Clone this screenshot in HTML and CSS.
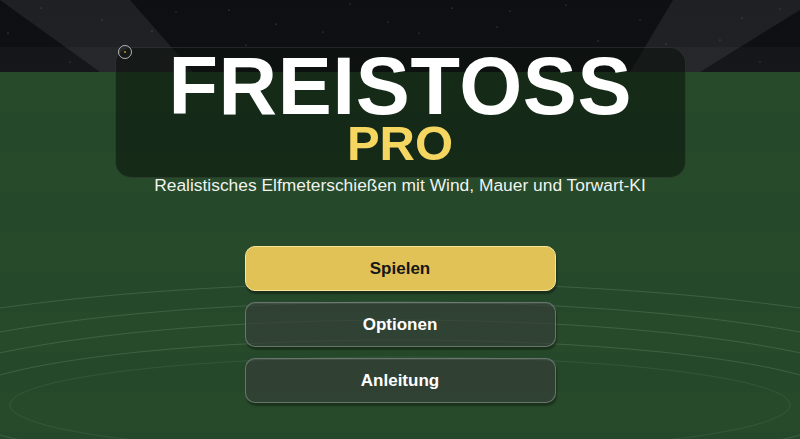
FILE: index.html
```html
<!DOCTYPE html>
<html lang="de">
<head>
<meta charset="utf-8">
<title>Freistoss Pro</title>
<link rel="stylesheet" href="styles.css">
</head>
<body>
<div class="scene">
  <svg class="backdrop" viewBox="0 0 800 439" width="800" height="439" aria-hidden="true">
    <polygon class="beam" points="0,0 130,0 193,72 100,72"/>
    <polygon class="beam" points="673,0 800,0 800,10 700,72 630,72"/>
    <g class="stars">
      <circle cx="152" cy="31" r="0.6"/><circle cx="176" cy="12" r="0.5"/><circle cx="229" cy="10" r="0.6"/>
      <circle cx="276" cy="24" r="0.6"/><circle cx="323" cy="32" r="0.5"/><circle cx="41" cy="8" r="0.5"/>
      <circle cx="8" cy="33" r="0.6"/><circle cx="70" cy="62" r="0.5"/><circle cx="419" cy="33" r="0.5"/>
      <circle cx="452" cy="8" r="0.6"/><circle cx="497" cy="27" r="0.5"/><circle cx="510" cy="11" r="0.5"/>
      <circle cx="598" cy="41" r="0.6"/><circle cx="566" cy="5" r="0.5"/><circle cx="742" cy="18" r="0.6"/>
      <circle cx="780" cy="9" r="0.5"/><circle cx="760" cy="62" r="0.5"/><circle cx="666" cy="44" r="0.5"/>
      <circle cx="350" cy="4" r="0.5"/><circle cx="388" cy="22" r="0.5"/><circle cx="246" cy="45" r="0.5"/>
      <circle cx="102" cy="20" r="0.5"/><circle cx="640" cy="20" r="0.5"/><circle cx="720" cy="40" r="0.5"/>
    </g>
    <g class="pitch">
      <ellipse cx="400" cy="405" rx="659" ry="122"/>
      <ellipse cx="400" cy="405" rx="567" ry="103"/>
      <ellipse cx="400" cy="405" rx="506" ry="85"/>
      <ellipse cx="400" cy="405" rx="451" ry="65"/>
      <ellipse class="inner" cx="400" cy="405" rx="390" ry="48"/>
    </g>
  </svg>

  <main class="menu">
    <header class="logo-card">
      <h1 class="title">FREISTOSS</h1>
      <div class="title-pro">PRO</div>
    </header>
    <p class="tagline">Realistisches Elfmeterschießen mit Wind, Mauer und Torwart-KI</p>
    <nav class="buttons">
      <button class="btn btn-primary" type="button">Spielen</button>
      <button class="btn btn-ghost" type="button">Optionen</button>
      <button class="btn btn-ghost" type="button">Anleitung</button>
    </nav>
  </main>

  <span class="ball"><span class="ball-dot"></span></span>
</div>
</body>
</html>
```

FILE: styles.css
```css
* { box-sizing: border-box; }

html, body {
  margin: 0;
  padding: 0;
  background: #264a28;
}

body {
  font-family: "Liberation Sans", Arial, Helvetica, sans-serif;
}

.scene {
  position: relative;
  width: 800px;
  height: 439px;
  overflow: hidden;
  background:
    linear-gradient(to bottom, #0e0f12 0, #0f1013 47px, #15161a 47px, #16171a 72px) top left / 100% 72px no-repeat,
    repeating-linear-gradient(to bottom, #274b2a 0, #274b2a 40px, #25482a 40px, #25482a 80px) 0 72px / 100% 100% no-repeat,
    #264a28;
}

.backdrop {
  position: absolute;
  left: 0;
  top: 0;
  display: block;
}

.beam { fill: rgba(255, 255, 255, 0.075); }

.stars circle { fill: rgba(210, 220, 200, 0.45); }

.pitch ellipse {
  fill: none;
  stroke: rgba(255, 255, 255, 0.12);
  stroke-width: 1;
}

.pitch .inner { stroke: rgba(255, 255, 255, 0.07); }

.menu {
  position: relative;
  display: flex;
  flex-direction: column;
  align-items: center;
  padding-top: 47px;
}

.logo-card {
  width: 571px;
  height: 131px;
  padding-top: 3px;
  border-radius: 16px;
  border: 1px solid rgba(255, 255, 255, 0.09);
  background: rgba(6, 14, 8, 0.52);
  text-align: center;
}

.title {
  margin: 0;
  font-size: 81px;
  line-height: 70px;
  font-weight: 700;
  color: #ffffff;
  letter-spacing: 0.7px;
  text-indent: 0.7px;
}

.title-pro {
  font-size: 49px;
  line-height: 44px;
  font-weight: 700;
  color: #f4d660;
}

.tagline {
  margin: -2px 0 0;
  font-size: 17.4px;
  line-height: 18px;
  color: rgba(255, 255, 255, 0.95);
}

.buttons {
  display: flex;
  flex-direction: column;
  gap: 11px;
  margin-top: 52px;
}

.btn {
  width: 311px;
  height: 45px;
  border-radius: 10px;
  font-family: inherit;
  font-size: 17px;
  font-weight: 700;
  cursor: pointer;
  box-shadow: 1px 3px 2px rgba(0, 0, 0, 0.35);
}

.btn-primary {
  background: #e1c257;
  border: 1.5px solid #f7e698;
  color: #161616;
}

.btn-ghost {
  background: rgba(52, 62, 56, 0.7);
  border: 1.5px solid rgba(255, 255, 255, 0.28);
  color: #ffffff;
  box-shadow: 1px 3px 2px rgba(0, 0, 0, 0.35), inset 0 1px 0 rgba(255, 255, 255, 0.08);
}

.ball {
  position: absolute;
  left: 118px;
  top: 45px;
  width: 14px;
  height: 14px;
  border-radius: 50%;
  border: 1px solid rgba(230, 230, 230, 0.75);
  display: flex;
  align-items: center;
  justify-content: center;
}

.ball-dot {
  width: 2px;
  height: 2px;
  border-radius: 50%;
  background: #c8902a;
}
```
